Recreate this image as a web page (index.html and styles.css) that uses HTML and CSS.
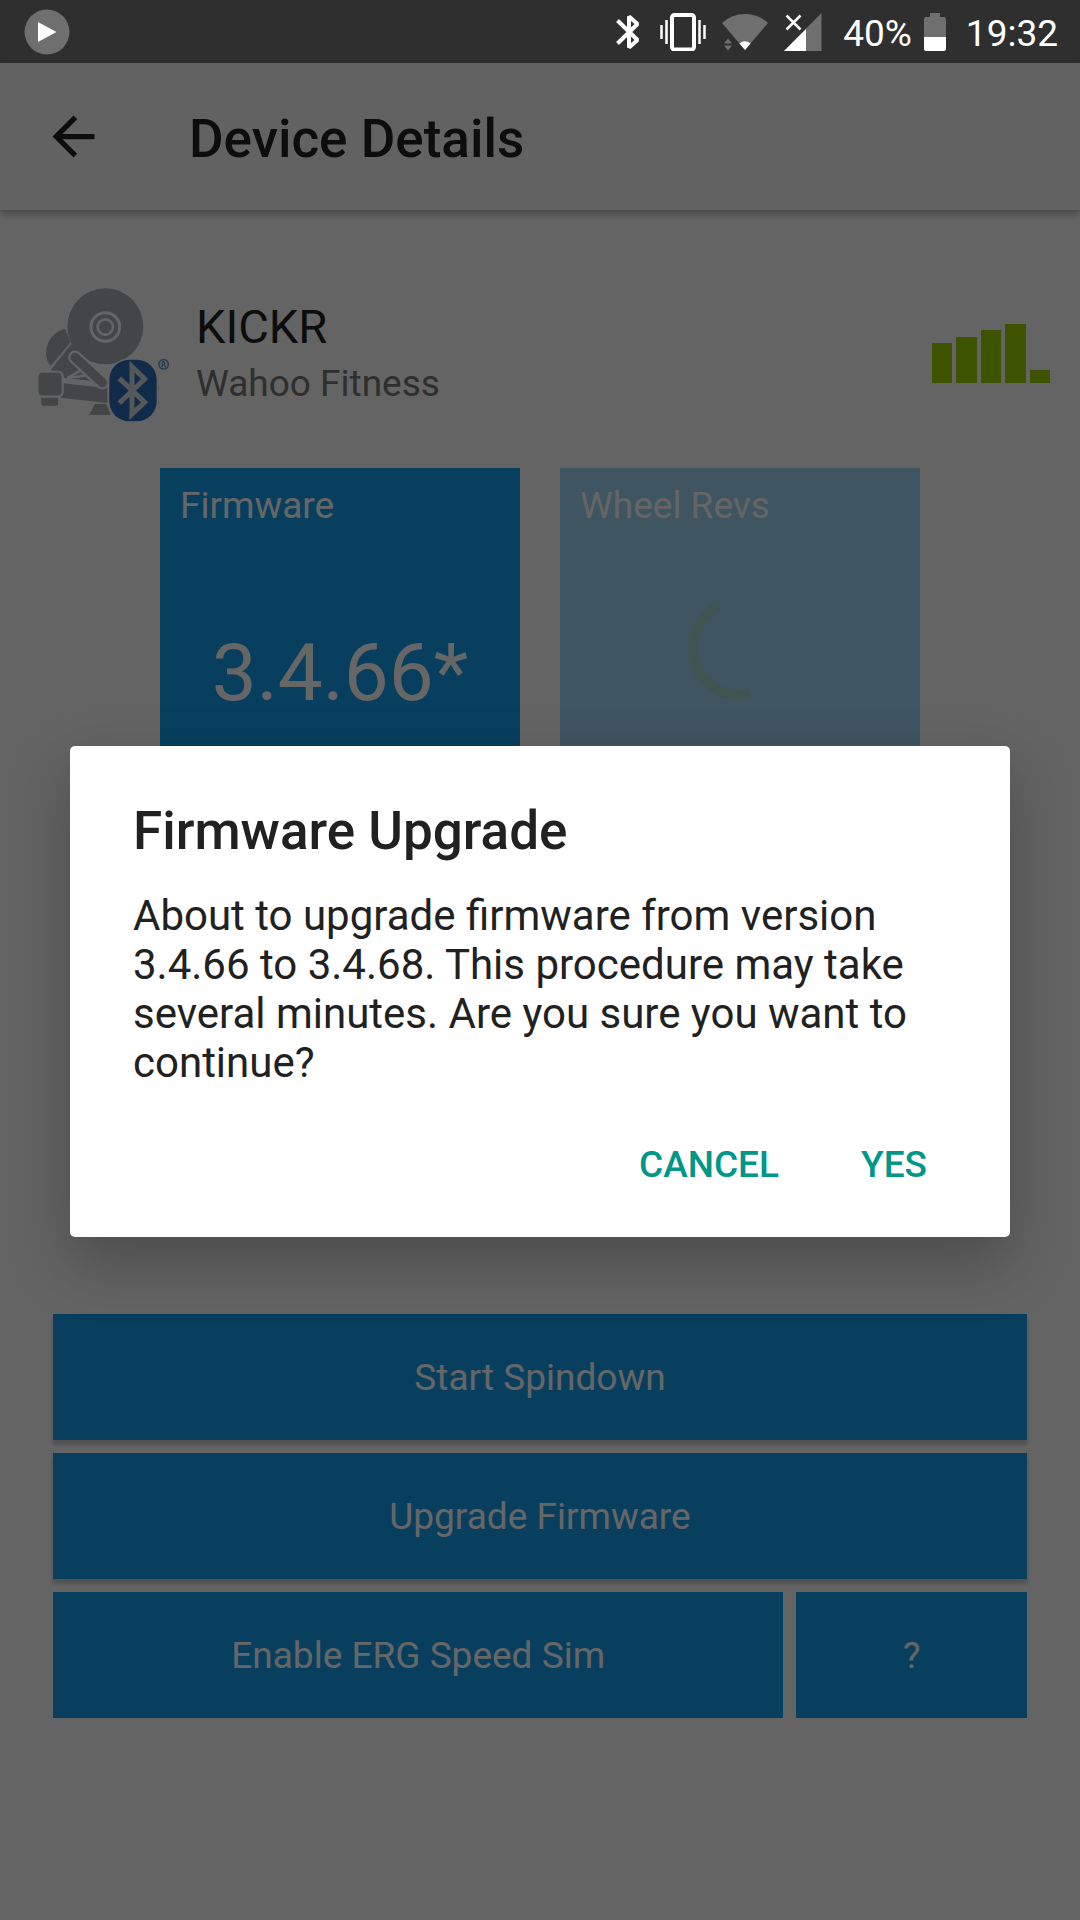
FILE: index.html
```html
<!DOCTYPE html>
<html lang="en">
<head>
<meta charset="utf-8">
<meta name="viewport" content="width=device-width, initial-scale=1">
<title>Device Details</title>
<link rel="stylesheet" href="styles.css">
</head>
<body>
<header class="status-bar">
  <svg class="status-play" width="46" height="46" viewBox="0 0 46 46" aria-hidden="true">
    <circle cx="23" cy="23" r="22.500" fill="#6f6f6f"/>
    <path d="M14 13l18.500 10L14 33z" fill="#fff"/>
  </svg>
  <div class="status-icons">
    <svg width="24" height="38" viewBox="0 0 24 38" fill="none" stroke="#fff" stroke-width="4" stroke-linejoin="bevel" aria-hidden="true">
      <path d="M1.500 7.500L21.500 27 13 34.500V3.500L21.500 11 1.500 30.500"/>
    </svg>
    <svg class="icon-vibrate" width="46" height="38" viewBox="0 0 46 38" fill="none" stroke="#fff" aria-hidden="true">
      <rect x="12" y="2" width="22" height="34.500" rx="2.500" stroke-width="4"/>
      <path d="M6.500 7v24M39.500 7v24" stroke-width="2.500"/>
      <path d="M1.500 12v14M44.500 12v14" stroke-width="2.500"/>
    </svg>
    <svg class="icon-wifi" width="46" height="38" viewBox="0 0 46 38" aria-hidden="true">
      <path d="M0 10Q10 1 23 1t23 9L23 37z" fill="#6f6f6f"/>
      <path d="M17.500 30.500q5.500-4.500 11 0L23 37z" fill="#fff"/>
      <path d="M2 30.500l4-5 4 5zM2 32.500h8l-4 5z" fill="#6f6f6f"/>
    </svg>
    <svg class="icon-signal" width="38" height="38" viewBox="0 0 38 38" aria-hidden="true">
      <path d="M0 38L37.500 0v38z" fill="#6f6f6f"/>
      <path d="M0 38l22-22v22z" fill="#fff"/>
      <path d="M2.500 2.500l14 14M16.500 2.500l-14 14" stroke="#fff" stroke-width="2.500"/>
    </svg>
    <span class="battery-level">40%</span>
    <svg class="icon-battery" width="22" height="38" viewBox="0 0 22 38" aria-hidden="true">
      <path d="M6 0h10v4h4q2 0 2 2v18H0V6q0-2 2-2h4z" fill="#6f6f6f"/>
      <path d="M0 24h22v12q0 2-2 2H2q-2 0-2-2z" fill="#fff"/>
    </svg>
    <time class="clock">19:32</time>
  </div>
</header>

<div class="screen">
  <header class="toolbar">
    <button class="back" type="button" aria-label="Back">
      <svg width="63" height="63" viewBox="0 0 24 24" fill="#212121" aria-hidden="true"><path d="M20 11H7.830l5.590-5.590L12 4l-8 8 8 8 1.410-1.410L7.830 13H20z"/></svg>
    </button>
    <h1 class="toolbar-title">Device Details</h1>
  </header>

  <main class="content">
    <section class="device">
      <svg class="device-icon" width="134" height="137" viewBox="51 51 402 411" aria-hidden="true">
        <g fill="#aaadb0">
          <path d="M135 176Q82 192 78 248q0 24 14 40l60-72z"/>
          <path d="M154 222l40 40v30l54 44-118-12-38-24z"/>
          <path d="M130 340l132 15v44l-140-16z"/>
          <path d="M225 402h34l14 33h-66z"/>
          <circle cx="256" cy="169" r="114"/>
          <path d="M388 334h22q12 20 0 44h-22zM404 392h8l5 8h-13z"/>
        </g>
        <path d="M142 324l42-24 12 17z" fill="#aaadb0" stroke="#fafafa" stroke-width="7"/>
        <path d="M126 332l140 18" stroke="#fafafa" stroke-width="8"/>
        <path d="M165 262l82 76" stroke="#fafafa" stroke-width="41" stroke-linecap="round"/>
        <path d="M165 262l82 76" stroke="#aaadb0" stroke-width="28" stroke-linecap="round"/>
        <circle cx="256" cy="171" r="43" fill="none" stroke="#fafafa" stroke-width="9"/>
        <circle cx="256" cy="171" r="23" fill="none" stroke="#fafafa" stroke-width="8"/>
        <g fill="#aaadb0" stroke="#fafafa" stroke-width="7">
          <path d="M60 374h58v24q0 13-13 13H73q-13 0-13-13z"/>
          <rect x="52" y="305" width="76" height="75" rx="15"/>
        </g>
        <rect x="264" y="265" width="150" height="192" rx="64" fill="#fafafa"/>
        <rect x="268" y="269" width="142" height="185" rx="60" fill="#2b6bbb"/>
        <path d="M298 325l76 72-38 35V290l38 37-76 72" fill="none" stroke="#d8dadc" stroke-width="15"/>
        <circle cx="431" cy="283" r="14" fill="none" stroke="#7198ca" stroke-width="5"/>
        <path d="M427 291v-15h5q5 4 0 8h-5m5 0l5 7" fill="none" stroke="#7198ca" stroke-width="4"/>
      </svg>
      <div class="device-text">
        <h2 class="device-name">KICKR</h2>
        <p class="device-maker">Wahoo Fitness</p>
      </div>
      <svg class="signal-bars" width="118" height="59" viewBox="0 0 118 59" role="img" aria-label="Signal strength">
        <path d="M0 19h20v40H0zM24 13h21v46H24zM49 6h20v53H49zM73 0h21v59H73zM98 46h20v13H98z"/>
      </svg>
    </section>

    <section class="tiles">
      <article class="tile">
        <h3 class="tile-label">Firmware</h3>
        <p class="tile-value">3.4.66*</p>
      </article>
      <article class="tile tile-loading">
        <h3 class="tile-label">Wheel Revs</h3>
        <svg class="spinner" width="104" height="104" viewBox="-52 -52 104 104" role="img" aria-label="Loading">
          <path d="M-20-42.500A47 47 0 0 0 10 46"/>
        </svg>
      </article>
    </section>

    <section class="actions">
      <button class="action" type="button">Start Spindown</button>
      <button class="action" type="button">Upgrade Firmware</button>
      <div class="action-row">
        <button class="action action-flat" type="button">Enable ERG Speed Sim</button>
        <button class="action action-flat" type="button">?</button>
      </div>
    </section>
  </main>

  <div class="scrim">
    <div class="dialog" role="alertdialog" aria-modal="true" aria-labelledby="dialog-title" aria-describedby="dialog-message">
      <h2 class="dialog-title" id="dialog-title">Firmware Upgrade</h2>
      <p class="dialog-message" id="dialog-message">About to upgrade firmware from version 3.4.66 to 3.4.68. This procedure may take several minutes. Are you sure you want to continue?</p>
      <div class="dialog-buttons">
        <button class="dialog-button" type="button">CANCEL</button>
        <button class="dialog-button" type="button">YES</button>
      </div>
    </div>
  </div>
</div>
</body>
</html>
```

FILE: styles.css
```css
* {
  box-sizing: border-box;
}

body,
h1,
h2,
h3,
p {
  margin: 0;
}

body {
  display: flex;
  flex-direction: column;
  min-height: 100vh;
  font-family: Roboto, sans-serif;
  font-size: 37px;
  line-height: 43px;
  background: #fafafa;
}

button {
  border: 0;
  padding: 0;
  font: inherit;
  cursor: pointer;
}

svg {
  display: block;
  flex: none;
}

/* Status bar */
.status-bar {
  display: flex;
  align-items: center;
  justify-content: space-between;
  height: 63px;
  padding: 0 22px 0 24px;
  background: #2f2f2f;
  color: #fff;
}

.status-icons {
  display: flex;
  align-items: center;
}

.icon-vibrate {
  margin-left: 20px;
}

.icon-wifi,
.icon-signal {
  margin-left: 16px;
}

.battery-level {
  margin-left: 21px;
}

.icon-battery {
  margin-left: 12px;
}

.battery-level,
.clock {
  padding-top: 3px;
}

.clock {
  margin-left: 20px;
}

/* App screen */
.screen {
  position: relative;
  flex: 1;
}

.toolbar {
  display: flex;
  align-items: center;
  gap: 84px;
  height: 147px;
  padding: 0 42px;
  background: #f5f5f5;
  box-shadow: 0 4px 8px rgba(0, 0, 0, 0.3);
}

.back {
  background: none;
}

.toolbar-title {
  padding-top: 4px;
  font-size: 53px;
  line-height: 62px;
  font-weight: 500;
  color: #212121;
}

.content {
  padding-bottom: 200px;
}

.device {
  display: flex;
  align-items: center;
  gap: 25px;
  padding: 77px 30px 44px 37px;
}

.device-text {
  display: flex;
  flex: 1;
  flex-direction: column;
  gap: 8px;
  padding-bottom: 8px;
}

.device-name {
  font-size: 47px;
  line-height: 55px;
  font-weight: 400;
  color: #212121;
}

.device-maker {
  color: #757575;
}

.signal-bars {
  margin-bottom: 4px;
  fill: #9bcf00;
}

.tiles {
  display: grid;
  grid-template-columns: repeat(2, 360px);
  grid-template-rows: repeat(2, 360px);
  justify-content: center;
  gap: 40px;
}

.tile {
  display: flex;
  flex-direction: column;
  padding: 16px 20px 9px;
  background: #149deb;
  color: #fff;
}

.tile-loading {
  position: relative;
  opacity: 0.4;
}

.tile-label {
  font-size: 37px;
  font-weight: 400;
}

.tile-value {
  margin: auto;
  font-size: 80px;
  line-height: 94px;
}

.spinner {
  position: absolute;
  inset: 0;
  margin: auto;
  fill: none;
  stroke: #0f9fa0;
  stroke: #109c84;
  stroke-width: 10px;
}

.actions {
  display: flex;
  flex-direction: column;
  gap: 13px;
  padding: 86px 53px 0;
}

.action {
  height: 126px;
  background: #149deb;
  color: #fff;
  box-shadow: 0 5px 4px rgba(0, 0, 0, 0.2);
}

.action-flat {
  box-shadow: none;
}

.action-row {
  display: grid;
  grid-template-columns: 19fr 6fr;
  gap: 13px;
}

/* Dialog */
.scrim {
  position: absolute;
  inset: 0;
  display: flex;
  align-items: center;
  padding: 0 70px;
  background: rgba(0, 0, 0, 0.6);
}

.dialog {
  flex: 1;
  padding: 54px 32px 25px 63px;
  border-radius: 5px;
  background: #fff;
  color: #212121;
  box-shadow: 0 24px 60px rgba(0, 0, 0, 0.25);
}

.dialog-title {
  font-size: 53px;
  line-height: 62px;
  font-weight: 500;
}

.dialog-message {
  margin-top: 29px;
  padding-right: 31px;
  font-size: 42px;
  line-height: 49px;
}

.dialog-buttons {
  display: flex;
  justify-content: flex-end;
  gap: 10px;
  margin-top: 30px;
}

.dialog-button {
  min-width: 168px;
  height: 95px;
  padding: 0 21px;
  background: none;
  font-weight: 500;
  color: #009688;
}
```
